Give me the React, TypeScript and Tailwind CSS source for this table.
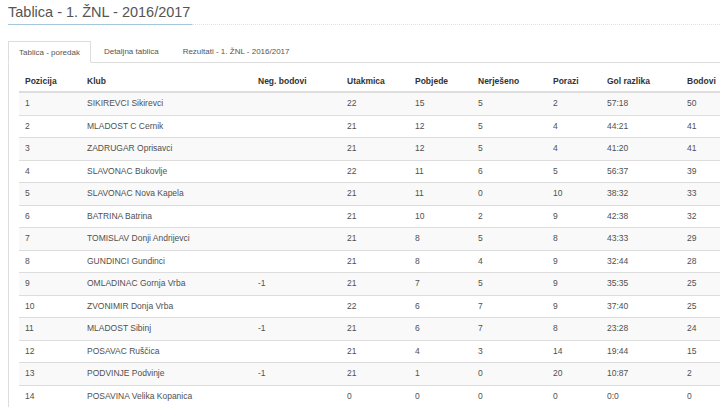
const rows: (string | number)[][] = [
  [1, "SIKIREVCI Sikirevci", "", 22, 15, 5, 2, "57:18", 50],
  [2, "MLADOST C Cernik", "", 21, 12, 5, 4, "44:21", 41],
  [3, "ZADRUGAR Oprisavci", "", 21, 12, 5, 4, "41:20", 41],
  [4, "SLAVONAC Bukovlje", "", 22, 11, 6, 5, "56:37", 39],
  [5, "SLAVONAC Nova Kapela", "", 21, 11, 0, 10, "38:32", 33],
  [6, "BATRINA Batrina", "", 21, 10, 2, 9, "42:38", 32],
  [7, "TOMISLAV Donji Andrijevci", "", 21, 8, 5, 8, "43:33", 29],
  [8, "GUNDINCI Gundinci", "", 21, 8, 4, 9, "32:44", 28],
  [9, "OMLADINAC Gornja Vrba", "-1", 21, 7, 5, 9, "35:35", 25],
  [10, "ZVONIMIR Donja Vrba", "", 22, 6, 7, 9, "37:40", 25],
  [11, "MLADOST Sibinj", "-1", 21, 6, 7, 8, "23:28", 24],
  [12, "POSAVAC Ruščica", "", 21, 4, 3, 14, "19:44", 15],
  [13, "PODVINJE Podvinje", "-1", 21, 1, 0, 20, "10:87", 2],
  [14, "POSAVINA Velika Kopanica", "", 0, 0, 0, 0, "0:0", 0],
];

const headers = [
  "Pozicija",
  "Klub",
  "Neg. bodovi",
  "Utakmica",
  "Pobjede",
  "Nerješeno",
  "Porazi",
  "Gol razlika",
  "Bodovi",
];

// column widths in px, measured off the screenshot
const cols = [
  "w-[62px]",
  "w-[171px]",
  "w-[89px]",
  "w-[68px]",
  "w-[63px]",
  "w-[75px]",
  "w-[54px]",
  "w-[80px]",
  "w-[79px]",
];

export default function App() {
  return (
    <div className="w-[720px] h-[409px] overflow-hidden bg-white font-['Liberation_Sans',Arial,sans-serif]">
      <div className="w-[780px] pl-2">
        <h1 className="pt-[4px] text-[14.5px] leading-[16px] text-[#555] font-normal whitespace-nowrap">
          Tablica - 1. ŽNL - 2016/2017
        </h1>
        <div className="mt-[4px] flex items-center">
          <div className="w-[184px] h-px bg-[#a5c7dc]"></div>
          <div className="flex-1 border-t border-dotted border-[#e3e3e3]"></div>
        </div>

        <div className="mt-[16px] flex h-[22px] border-b border-[#ddd] text-[8px] text-[#555]">
          <div className="h-[22px] px-[10px] mr-[2px] pt-[1px] flex items-center border border-[#ddd] border-b-white bg-white">
            Tablica - poredak
          </div>
          <div className="h-[21px] px-[11px] mr-[2px] pt-[1px] flex items-center">Detaljna tablica</div>
          <div className="h-[21px] px-[11px] pt-[1px] flex items-center">Rezultati - 1. ŽNL - 2016/2017</div>
        </div>

        <div className="border-l border-[#ddd] pl-[10px]">
          <div className="flex h-[30px] items-end pb-[3px] border-b-2 border-[#ddd] text-[8.5px] font-bold text-[#333]">
            {headers.map((h, i) => (
              <div key={h} className={`${cols[i]} pl-[6px] shrink-0 whitespace-nowrap`}>
                {h}
              </div>
            ))}
          </div>
          {rows.map((r, ri) => (
            <div
              key={ri}
              className={`flex items-center text-[8.5px] text-[#505050] ${
                ri === 0 ? "h-[21.5px]" : "h-[22.5px] border-t border-[#ddd]"
              } ${ri % 2 === 0 ? "bg-[#f9f9f9]" : "bg-white"}`}
            >
              {r.map((c, ci) => (
                <div key={ci} className={`${cols[ci]} pl-[6px] shrink-0 whitespace-nowrap`}>
                  {c}
                </div>
              ))}
            </div>
          ))}
        </div>
      </div>
    </div>
  );
}
